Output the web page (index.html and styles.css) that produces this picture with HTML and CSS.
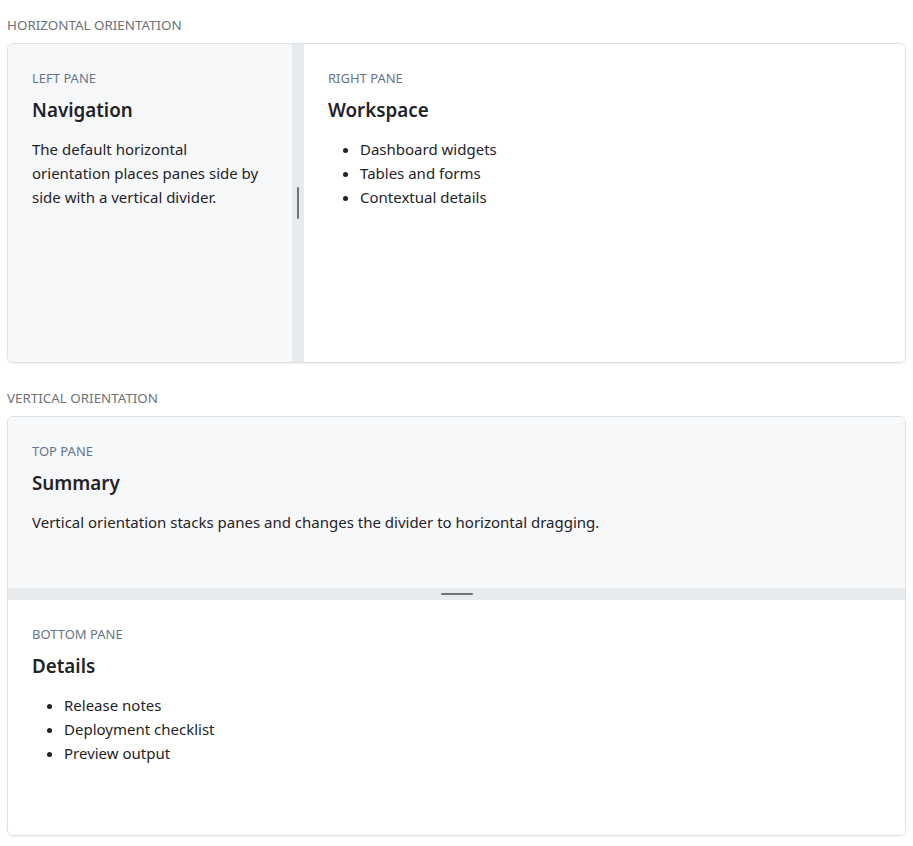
FILE: index.html
```html
<!DOCTYPE html>
<html lang="en">
<head>
    <meta charset="UTF-8">
    <meta name="viewport" content="width=device-width, initial-scale=1.0">
    <title>Split panes</title>
    <link rel="stylesheet" href="styles.css">
</head>
<body>
    <div class="section-label">Horizontal orientation</div>
    <div class="splitter horizontal">
        <div class="pane pane-left">
            <div class="pane-label">Left pane</div>
            <h2>Navigation</h2>
            <p>The default horizontal orientation places panes side by side with a vertical divider.</p>
        </div>
        <div class="divider"><span class="handle"></span></div>
        <div class="pane pane-right">
            <div class="pane-label">Right pane</div>
            <h2>Workspace</h2>
            <ul>
                <li>Dashboard widgets</li>
                <li>Tables and forms</li>
                <li>Contextual details</li>
            </ul>
        </div>
    </div>

    <div class="section-label second">Vertical orientation</div>
    <div class="splitter vertical">
        <div class="pane pane-top">
            <div class="pane-label">Top pane</div>
            <h2>Summary</h2>
            <p>Vertical orientation stacks panes and changes the divider to horizontal dragging.</p>
        </div>
        <div class="divider"><span class="handle"></span></div>
        <div class="pane pane-bottom">
            <div class="pane-label">Bottom pane</div>
            <h2>Details</h2>
            <ul>
                <li>Release notes</li>
                <li>Deployment checklist</li>
                <li>Preview output</li>
            </ul>
        </div>
    </div>
</body>
</html>
```
FILE: styles.css
```css
body {
    margin: 0;
    padding: 15px 7px 10px;
    font-family: 'Segoe UI', 'Noto Sans', sans-serif;
    font-size: 15px;
    color: #1f2328;
    background-color: #ffffff;
}
.section-label {
    font-size: 13.4px;
    line-height: 20px;
    text-transform: uppercase;
    color: #6e7178;
    margin-bottom: 8px;
}
.section-label.second {
    margin-top: 25px;
}
.splitter {
    display: flex;
    border: 1px solid #dde1e6;
    border-radius: 6px;
    overflow: hidden;
    box-shadow: 0 1px 2px rgba(0, 0, 0, 0.06);
}
.splitter.horizontal {
    height: 318px;
}
.splitter.vertical {
    flex-direction: column;
    height: 418px;
}
.pane {
    padding: 24px;
    box-sizing: border-box;
}
.pane-left {
    flex: 0 0 284px;
    background-color: #f7f8fa;
}
.pane-right {
    flex: 1;
    background-color: #ffffff;
}
.pane-top {
    flex: 0 0 171px;
    background-color: #f7f8fa;
}
.pane-bottom {
    flex: 1;
    background-color: #ffffff;
}
.divider {
    background-color: #e8ebee;
    display: flex;
    justify-content: center;
    align-items: center;
}
.horizontal .divider {
    flex: 0 0 12px;
}
.vertical .divider {
    flex: 0 0 12px;
}
.handle {
    background-color: #6f7378;
    border-radius: 1px;
}
.horizontal .handle {
    width: 2px;
    height: 32px;
}
.vertical .handle {
    width: 32px;
    height: 2px;
}
.pane-label {
    font-size: 13px;
    line-height: 20px;
    text-transform: uppercase;
    color: #66758a;
}
h2 {
    font-size: 18.8px;
    line-height: 28px;
    font-weight: 600;
    margin: 8px 0 0;
}
p {
    margin: 13px 0 0;
    line-height: 24px;
}
ul {
    margin: 13px 0 0;
    padding-left: 32px;
    line-height: 24px;
}
```
